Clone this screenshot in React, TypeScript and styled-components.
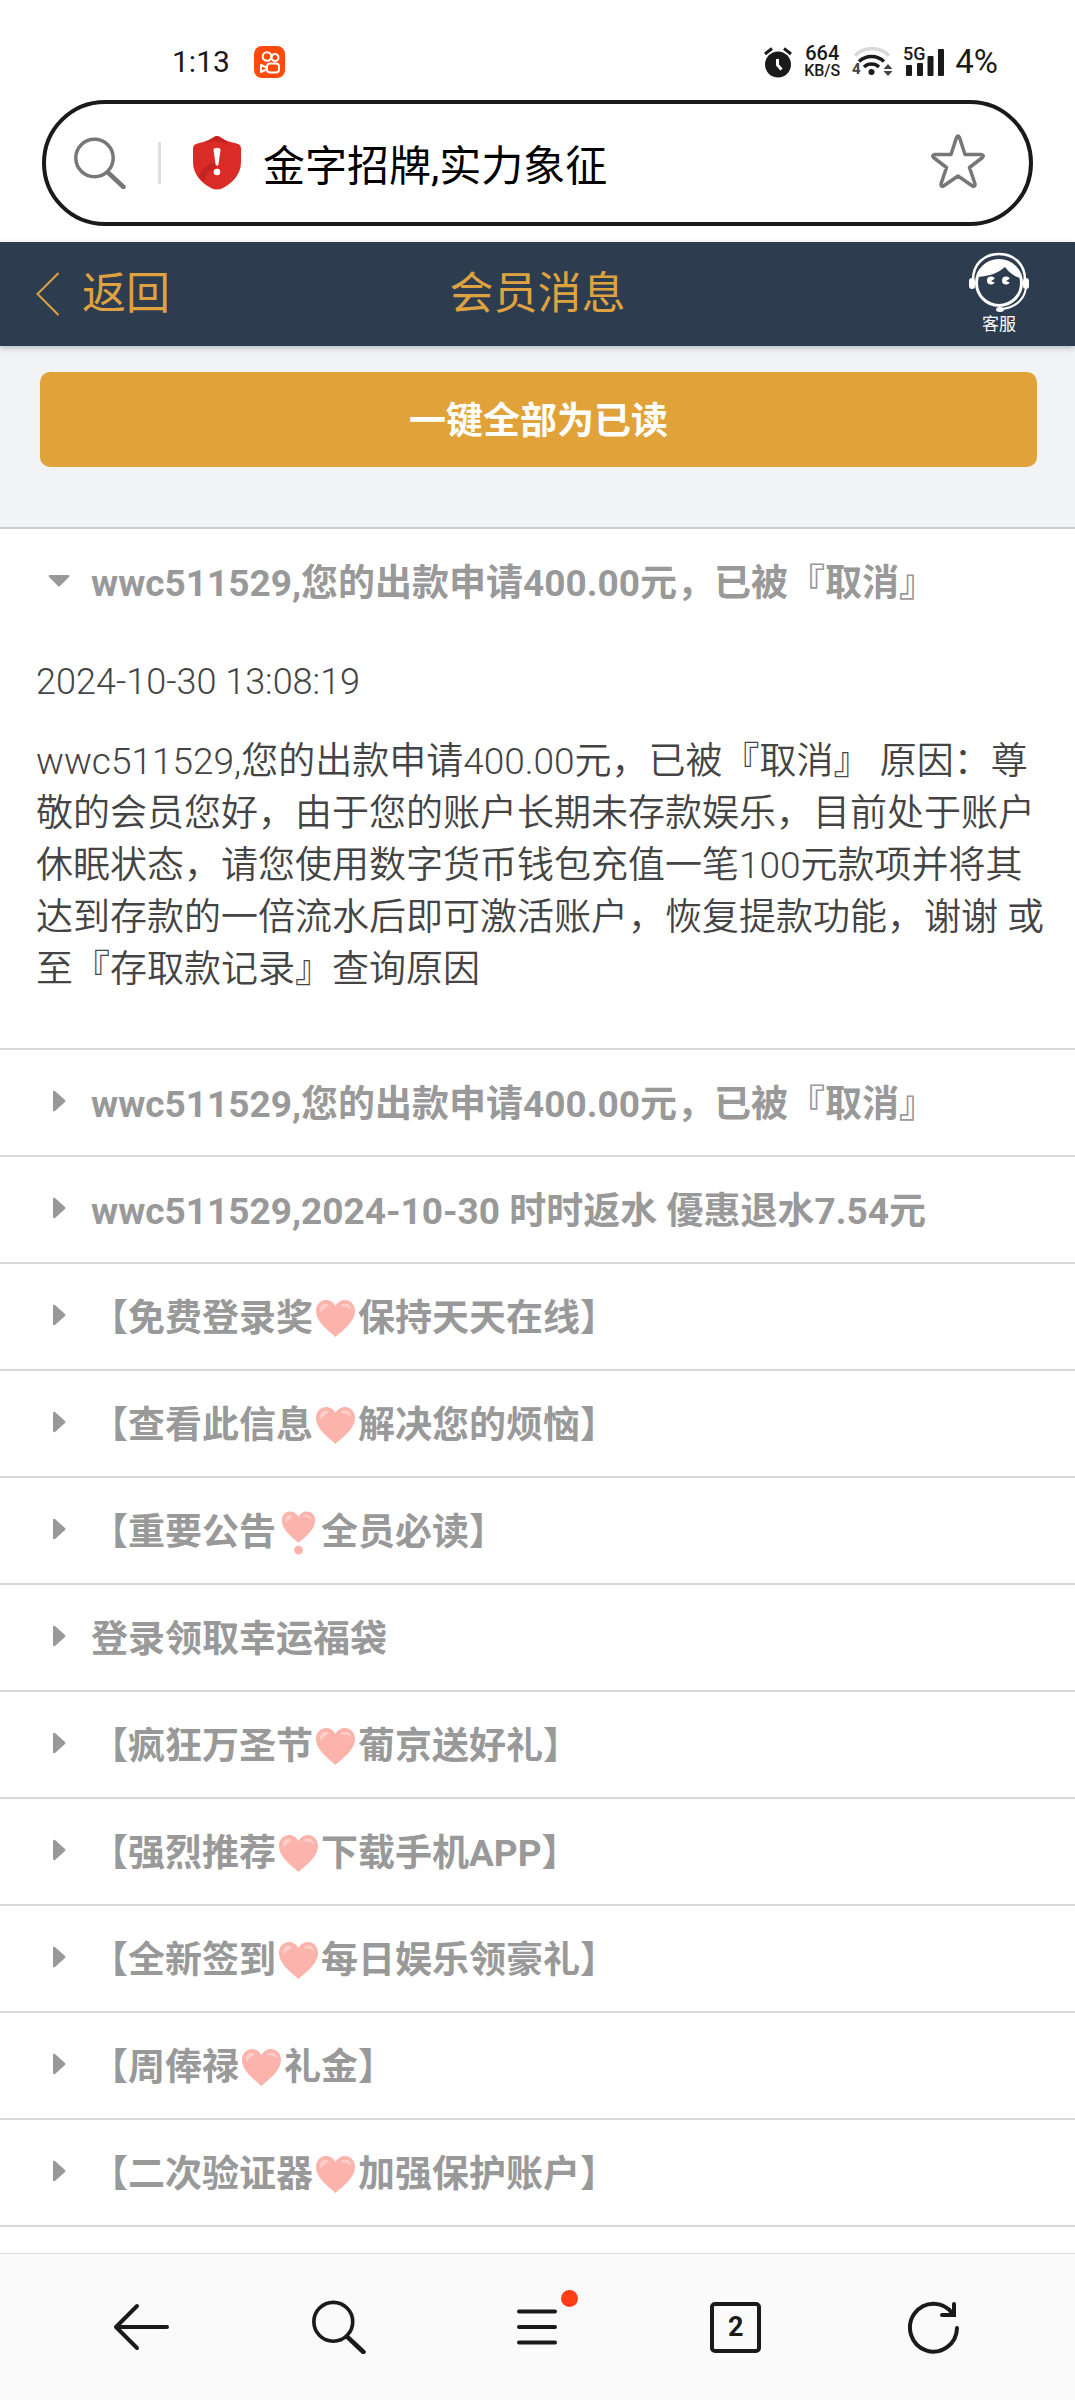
import React, { useState } from 'react';
import styled, { createGlobalStyle } from 'styled-components';

const GlobalStyle = createGlobalStyle`
  *, *::before, *::after { box-sizing: border-box; }
  body {
    margin: 0;
    background: #fff;
    font-family: Roboto, "Noto Sans CJK SC", sans-serif;
  }
  button, input { font: inherit; color: inherit; }
  button { border: 0; padding: 0; background: none; cursor: pointer; }
  svg { display: block; flex: none; }
`;

const Page = styled.div`
  display: flex;
  flex-direction: column;
  min-height: 100vh;
`;

const StatusBar = styled.div`
  display: flex;
  align-items: center;
  justify-content: space-between;
  height: 100px;
  padding: 24px 77px 0 172px;
  color: #1a1a1a;
`;

const StatusGroup = styled.div<{ $gap: number }>`
  display: flex;
  align-items: center;
  gap: ${(p) => p.$gap}px;
`;

const StatusText = styled.span<{ $size: number }>`
  font-size: ${(p) => p.$size}px;
  line-height: 32px;
`;

const NetSpeed = styled.span`
  display: flex;
  flex-direction: column;
  align-items: center;
  margin: 0 2px;
  font-size: 20px;
  font-weight: 500;
  line-height: 18px;
`;

const NetUnit = styled.span`
  font-size: 16px;
`;

const SearchBar = styled.form`
  display: flex;
  align-items: center;
  height: 126px;
  margin: 0 42px 16px;
  padding: 0 44px 0 28px;
  border: 4px solid #1a1a1a;
  border-radius: 63px;
`;

const Divider = styled.span`
  width: 3px;
  height: 42px;
  margin: 0 32px;
  background: #e0e0e0;
`;

const SearchInput = styled.input`
  flex: 1;
  min-width: 0;
  height: 64px;
  margin: 0 22px;
  padding: 0 0 2px;
  border: 0;
  outline: 0;
  background: none;
  color: #000;
  font-size: 42px;
`;

const Favorite = styled.button`
  padding-bottom: 4px;
`;

const Header = styled.header`
  display: grid;
  grid-template-columns: 1fr auto 1fr;
  align-items: center;
  height: 104px;
  padding: 0 36px;
  background: #2d3c4e;
  color: #dfa240;
  box-shadow: 0 2px 6px rgba(45, 60, 78, 0.3);
  z-index: 1;
`;

const BackLink = styled.a`
  display: flex;
  align-items: center;
  gap: 22px;
  color: inherit;
  font-size: 44px;
  line-height: 52px;
  text-decoration: none;
`;

const Title = styled.h1`
  margin: 0;
  font-size: 44px;
  font-weight: 400;
  line-height: 52px;
`;

const Service = styled.a`
  display: flex;
  flex-direction: column;
  align-items: center;
  justify-self: end;
  padding-right: 10px;
  color: #fff;
  font-size: 17px;
  line-height: 24px;
  text-decoration: none;
`;

const Actions = styled.div`
  padding: 26px 38px 60px 40px;
  background: #f2f3f5;
`;

const ReadAll = styled.button`
  display: block;
  width: 100%;
  height: 95px;
  padding-bottom: 4px;
  border-radius: 10px;
  background: #e1a339;
  color: #fff;
  font-size: 37px;
  font-weight: 700;
`;

const List = styled.ul`
  flex: 1;
  margin: 0;
  padding: 0;
  border-top: 2px solid #ccc;
  list-style: none;
`;

const Item = styled.li`
  border-bottom: 2px solid #d8d8d8;
`;

const ItemToggle = styled.button`
  display: flex;
  align-items: center;
  width: 100%;
  height: 105px;
  padding: 4px 40px 0 48px;
  color: #999;
  font-size: 37px;
  font-weight: 700;
  line-height: 52px;
  text-align: left;
`;

const Caret = styled.svg`
  width: 24px;
  height: 28px;
  margin: 0 19px 8px 0;
  fill: currentColor;
`;

const ItemTitle = styled.span`
  display: flex;
  align-items: center;
  white-space: pre;
`;

const ItemBody = styled.div`
  padding: 22px 28px 52px 36px;
  color: #444;
  font-size: 37px;
  font-weight: 350;
  line-height: 52px;
`;

const BodyDate = styled.p`
  margin: 0 0 28px;
  font-size: 36px;
`;

const BodyText = styled.p`
  margin: 0;
`;

const NavBar = styled.nav`
  display: grid;
  grid-template-columns: repeat(5, 1fr);
  height: 147px;
  padding: 0 42px;
  border-top: 1px solid #ddd;
  background: #fafafa;
  color: #1a1a1a;
`;

const NavButton = styled.button`
  display: flex;
  align-items: center;
  justify-content: center;
`;

const IconWrap = styled.span`
  position: relative;
  display: block;
`;

const Badge = styled.span`
  position: absolute;
  top: -13px;
  right: -20px;
  width: 17px;
  height: 17px;
  border-radius: 50%;
  background: #ff3d16;
`;

const TabCount = styled.span`
  display: flex;
  align-items: center;
  justify-content: center;
  width: 51px;
  height: 51px;
  border: 4px solid currentColor;
  border-radius: 5px;
  font-size: 27px;
  font-weight: 700;
  line-height: 32px;
`;

function KuaiIcon() {
  return (
    <svg width="31" height="32" viewBox="0 0 31 32" fill="none" stroke="#fff" strokeWidth="2">
      <rect width="31" height="32" rx="8" fill="#ff4a0d" stroke="none" />
      <circle cx="13" cy="10.500" r="4.300" />
      <circle cx="21" cy="11.500" r="3.500" />
      <rect x="13" y="17.500" width="12" height="9" rx="3" />
      <path d="M12.500 21.500 7 19v7l5.500-2.500" strokeLinejoin="round" />
    </svg>
  );
}

function AlarmIcon() {
  return (
    <svg width="28" height="31" viewBox="0 0 28 31" fill="none" stroke="currentColor" strokeWidth="3">
      <path d="M1 7 8 1.500M27 7 20 1.500" />
      <circle cx="14" cy="17.500" r="13" fill="currentColor" stroke="none" />
      <path d="M13.500 12v6l4 4.500" stroke="#fff" />
    </svg>
  );
}

function WifiIcon() {
  return (
    <svg width="41" height="32" viewBox="0 0 41 32" fill="none" stroke="currentColor" strokeWidth="3.500">
      <path d="M3 9.500a24 24 0 0 1 34 0" stroke="#d9d9d9" />
      <path d="M7 15.500a18 18 0 0 1 25 0M12 21a11 11 0 0 1 15 0" />
      <circle cx="19.500" cy="26" r="3" fill="currentColor" stroke="none" />
      <path d="m31.500 23 4.500-5 4.500 5zM31.500 25l4.500 5 4.500-5z" fill="#444" stroke="none" />
      <text x="0" y="28" fontSize="15" fontWeight="700" fill="#444" stroke="none">4</text>
    </svg>
  );
}

function SignalIcon() {
  return (
    <svg width="42" height="42" viewBox="0 -6 42 42" fill="currentColor">
      <text x="0" y="13" fontSize="18" fontWeight="500">5G</text>
      <rect x="3" y="18" width="6" height="11" rx="1" />
      <rect x="14" y="16" width="6" height="13" rx="1" />
      <rect x="24.500" y="9" width="6" height="20" rx="1" />
      <rect x="35" y="2" width="6" height="27" rx="1" />
    </svg>
  );
}

function SearchIcon({ color, size }: { color: string; size: number }) {
  return (
    <svg width={size} height={size} viewBox="0 0 52 52" fill="none" stroke={color} strokeLinecap="round">
      <circle cx="20.500" cy="21" r="18.700" strokeWidth="3.500" />
      <path d="m34 35.500 15.500 14.500" strokeWidth="4.500" />
    </svg>
  );
}

function ShieldIcon() {
  return (
    <svg width="48" height="54" viewBox="0 0 48 54">
      <path d="M24 0c2 0 4 2 8 4 4 2 9 2.500 13 4 2 1 3 2 3 5v13c0 13-9 21-18 26-4 2-8 2-12 0C9 47 0 39 0 26V13c0-3 1-4 3-5 4-1.500 9-2 13-4 4-2 6-4 8-4z" fill="#d92c26" />
      <path d="M24 0c2 0 4 2 8 4L35 9C29 5 19 5 11 6l5-2c4-2 6-4 8-4zM6 41c3-9 9-14 16-14l2 5c-7 1-12 7-13 14z" fill="#c42420" />
      <path d="M20.500 14c0-3 7-3 7 0l-2 14c-.3 2-2.700 2-3 0z" fill="#fff" />
      <circle cx="24" cy="36" r="3.300" fill="#fff" />
    </svg>
  );
}

function StarIcon() {
  return (
    <svg width="54" height="54" viewBox="0 0 54 54" fill="none" stroke="#777" strokeWidth="3.500" strokeLinejoin="round">
      <path d="M25.500 3.500q1.500-3 3 0L34 20.500H50q3.500.5 1.500 3L38.500 33.500 44 50q.3 3-2.500 2L27 42 12.500 52q-2.800 1-2.500-2L15.500 33.500 2.500 23.500Q.5 21 4 20.500H20z" />
    </svg>
  );
}

function ServiceIcon() {
  return (
    <svg width="60" height="60" viewBox="0 0 60 60" fill="none" stroke="#fff">
      <path d="M4 28C4 12 15 2 30 2s26 10 26 26" strokeWidth="2.500" />
      <circle cx="30" cy="31" r="22.500" strokeWidth="3" />
      <path d="M9 25C13 12 22 8 30 8c10 0 20 7 22 18-7-1-12-6-16-11-7 6-15 9-27 10z" fill="#fff" stroke="none" />
      <rect x="0" y="26" width="6" height="11" rx="3" fill="#fff" stroke="none" />
      <rect x="54" y="26" width="6" height="11" rx="3" fill="#fff" stroke="none" />
      <path d="M57 36c-2 12-11 20-25 21" strokeWidth="2" />
      <ellipse cx="31" cy="57.500" rx="4" ry="2.500" fill="#fff" stroke="none" />
      <circle cx="22" cy="28.500" r="4" fill="#fff" stroke="none" />
      <circle cx="37" cy="28.500" r="4" fill="#fff" stroke="none" />
      <path d="m22 29 5-3v5zM37 29l5-3v5z" fill="#2d3c4e" stroke="none" />
    </svg>
  );
}

const HEART = 'M22.500 39C16 33 3 24 3 13 3 6 8 2 13 2c4.500 0 7.500 2.500 9.500 6C24.500 4.500 27.500 2 32 2c5 0 10 4 10 11 0 11-13 20-19.500 26z';

function HeartIcon() {
  return (
    <svg width="45" height="42" viewBox="0 0 45 42" role="img" aria-label="❤️">
      <path d={HEART} fill="#fbb3ab" />
      <path d="M7 12c0-5 4-7 7-6s0 3-2 4-3 4-4 4-1-1-1-2zM28 7c4-3 9-1 10 3 0 2-2 0-4-1s-5 0-6-1z" fill="#fdcfca" />
    </svg>
  );
}

function HeartMarkIcon() {
  return (
    <svg width="45" height="46" viewBox="0 0 46 46" role="img" aria-label="❣️">
      <path d="M23 33C17 28 6 20 6 10c0-6 4-9 8.500-9C18.500 1 21 3 23 6.500 25 3 27.500 1 31.500 1 36 1 40 4 40 10c0 10-11 18-17 23z" fill="#fbb3ab" />
      <path d="M9.500 10c0-4 3-6 5.500-5s0 3-1.500 4-2 3-3 3-1-1-1-2zM27 6c3-3 8-1 9 2 0 2-2 0-4-1s-4 0-5-1z" fill="#fdcfca" />
      <circle cx="23" cy="40.500" r="4.500" fill="#fbb3ab" />
    </svg>
  );
}

type Message = { title: string; date?: string; body?: string };

const messages: Message[] = [
  {
    title: 'wwc511529,您的出款申请400.00元，已被『取消』',
    date: '2024-10-30 13:08:19',
    body: 'wwc511529,您的出款申请400.00元，已被『取消』 原因：尊敬的会员您好，由于您的账户长期未存款娱乐，目前处于账户休眠状态，请您使用数字货币钱包充值一笔100元款项并将其达到存款的一倍流水后即可激活账户，恢复提款功能，谢谢 或至『存取款记录』查询原因',
  },
  { title: 'wwc511529,您的出款申请400.00元，已被『取消』' },
  { title: 'wwc511529,2024-10-30 时时返水 優惠退水7.54元' },
  { title: '【免费登录奖❤保持天天在线】' },
  { title: '【查看此信息❤解决您的烦恼】' },
  { title: '【重要公告❣全员必读】' },
  { title: '登录领取幸运福袋' },
  { title: '【疯狂万圣节❤葡京送好礼】' },
  { title: '【强烈推荐❤下载手机APP】' },
  { title: '【全新签到❤每日娱乐领豪礼】' },
  { title: '【周俸禄❤礼金】' },
  { title: '【二次验证器❤加强保护账户】' },
];

function renderTitle(title: string) {
  return title.split(/([❤❣])/).map((part, i) => {
    if (part === '❤') return <HeartIcon key={i} />;
    if (part === '❣') return <HeartMarkIcon key={i} />;
    return <span key={i}>{part}</span>;
  });
}

function MessageItem({ message, open, onToggle }: { message: Message; open: boolean; onToggle: () => void }) {
  return (
    <Item>
      <ItemToggle type="button" aria-expanded={open} onClick={onToggle}>
        <Caret viewBox="0 0 24 28" aria-hidden="true">
          {open ? (
            <path d="M2 9h18q2 0 1 2l-9 9q-1 1-2 0l-9-9q-1-2 1-2z" />
          ) : (
            <path d="M5 5q0-2 2-1l10 9q1 1 0 2L7 24q-2 1-2-1z" />
          )}
        </Caret>
        <ItemTitle>{renderTitle(message.title)}</ItemTitle>
      </ItemToggle>
      {open && message.body && (
        <ItemBody>
          <BodyDate>{message.date}</BodyDate>
          <BodyText>{message.body}</BodyText>
        </ItemBody>
      )}
    </Item>
  );
}

export default function App() {
  const [openIndex, setOpenIndex] = useState(0);
  const [query, setQuery] = useState('金字招牌,实力象征');

  return (
    <Page>
      <GlobalStyle />
      <StatusBar>
        <StatusGroup $gap={24}>
          <StatusText $size={30}>1:13</StatusText>
          <KuaiIcon />
        </StatusGroup>
        <StatusGroup $gap={10}>
          <AlarmIcon />
          <NetSpeed>
            <span>664</span>
            <NetUnit>KB/S</NetUnit>
          </NetSpeed>
          <WifiIcon />
          <SignalIcon />
          <StatusText $size={33}>4%</StatusText>
        </StatusGroup>
      </StatusBar>
      <SearchBar role="search" onSubmit={(e) => e.preventDefault()}>
        <SearchIcon color="#777" size={52} />
        <Divider />
        <ShieldIcon />
        <SearchInput aria-label="搜索" value={query} onChange={(e) => setQuery(e.target.value)} />
        <Favorite type="button" aria-label="收藏">
          <StarIcon />
        </Favorite>
      </SearchBar>
      <Header>
        <BackLink href="#back">
          <svg width="24" height="44" viewBox="0 0 24 44" fill="none" stroke="currentColor" strokeWidth="2">
            <path d="M22.500 1 1.500 22l21 21" />
          </svg>
          返回
        </BackLink>
        <Title>会员消息</Title>
        <Service href="#service">
          <ServiceIcon />
          客服
        </Service>
      </Header>
      <Actions>
        <ReadAll type="button">一键全部为已读</ReadAll>
      </Actions>
      <List>
        {messages.map((m, i) => (
          <MessageItem key={i} message={m} open={openIndex === i} onToggle={() => setOpenIndex(openIndex === i ? -1 : i)} />
        ))}
      </List>
      <NavBar>
        <NavButton type="button" aria-label="后退">
          <svg width="56" height="48" viewBox="0 0 56 48" fill="none" stroke="currentColor" strokeWidth="4" strokeLinecap="round" strokeLinejoin="round">
            <path d="M24 3 3 24l21 21M3 24h51" />
          </svg>
        </NavButton>
        <NavButton type="button" aria-label="搜索">
          <SearchIcon color="currentColor" size={54} />
        </NavButton>
        <NavButton type="button" aria-label="菜单">
          <IconWrap>
            <svg width="42" height="48" viewBox="0 0 42 48" stroke="currentColor" strokeWidth="4" strokeLinecap="round">
              <path d="M3 8.500h36M3 24h36M3 39.500h36" />
            </svg>
            <Badge />
          </IconWrap>
        </NavButton>
        <NavButton type="button" aria-label="标签页">
          <TabCount>2</TabCount>
        </NavButton>
        <NavButton type="button" aria-label="刷新">
          <svg width="52" height="54" viewBox="0 0 52 54" fill="none" stroke="currentColor" strokeWidth="4" strokeLinecap="round">
            <path d="M49 28A23.500 24 0 1 1 44.500 13.500M46 4v11H34" />
          </svg>
        </NavButton>
      </NavBar>
    </Page>
  );
}
